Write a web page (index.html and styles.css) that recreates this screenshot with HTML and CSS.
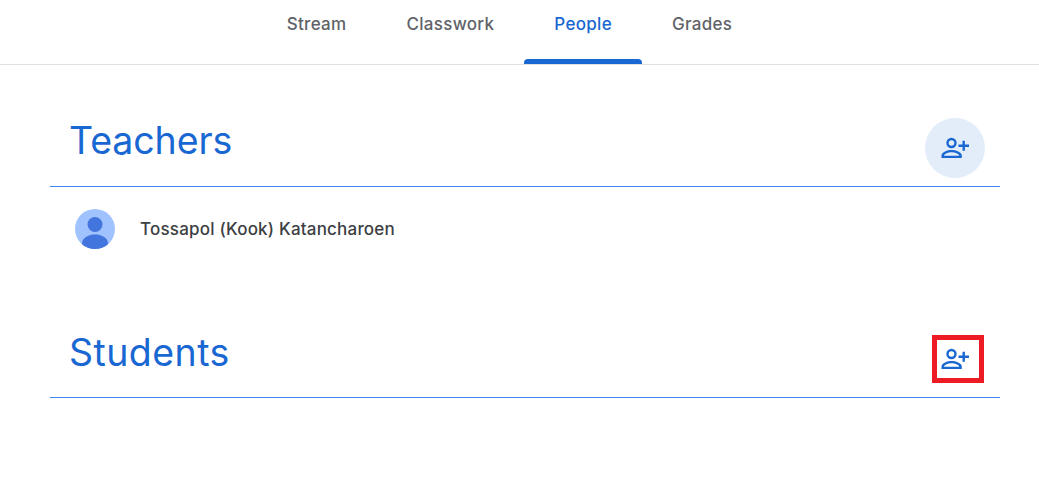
FILE: index.html
```html
<!doctype html>
<html lang="en">
<head>
<meta charset="utf-8" />
<title>People</title>
<link rel="stylesheet" href="styles.css">
</head>
<body>

<nav class="tabs">
	<a class="tab" href="#">Stream</a>
	<a class="tab" href="#">Classwork</a>
	<a class="tab active" href="#">People</a>
	<a class="tab" href="#">Grades</a>
</nav>

<main class="people">

	<section class="group teachers">
		<header class="group-head">
			<h2>Teachers</h2>
			<button class="invite filled" aria-label="Invite teachers">
				<svg viewBox="0 0 28 24" width="28" height="24"><use href="#add-person"/></svg>
			</button>
		</header>
		<div class="person">
			<svg class="avatar" viewBox="0 0 40 40" width="40" height="40">
				<clipPath id="avatar-clip"><circle cx="20" cy="20" r="20"/></clipPath>
				<circle cx="20" cy="20" r="20" fill="#a0c3ff"/>
				<circle cx="20" cy="15.5" r="7.5" fill="#4375de"/>
				<path d="M7 40 V35 C7 28 14 25.500 20 25.500 S33 28 33 35 V40 Z" fill="#4375de" clip-path="url(#avatar-clip)"/>
			</svg>
			<span class="name">Tossapol (Kook) Katancharoen</span>
		</div>
	</section>

	<section class="group students">
		<header class="group-head">
			<h2>Students</h2>
			<button class="invite marked" aria-label="Invite students">
				<svg viewBox="0 0 28 24" width="28" height="24"><use href="#add-person"/></svg>
			</button>
		</header>
	</section>

</main>

<svg class="defs" width="0" height="0">
	<symbol id="add-person" viewBox="0 0 28 24">
		<circle cx="10.500" cy="7" r="4" fill="none" stroke="#1967d2" stroke-width="2.400"/>
		<path d="M0.500 22 V19.500 C0.500 16 6.500 14 10.500 14 S20.800 16 20.800 19.500 V22 Z M3 19.800 H18.300 C18 17.500 13.500 16.200 10.500 16.200 S3.300 17.500 3 19.800 Z" fill="#1967d2" fill-rule="evenodd"/>
		<path d="M17.500 9.700 H28 M22.700 4.700 V14.700" fill="none" stroke="#1967d2" stroke-width="2.400"/>
	</symbol>
</svg>

</body>
</html>
```

FILE: styles.css
```css
:root {
	--blue: #1967d2;
	--grey: #5f6368;
	font-family: "Inter", "Roboto", sans-serif;
}

body, html {
	margin: 0;
	padding: 0;
	background: #fff;
}

.defs {
	display: block;
	height: 0;
}


/* Tabs */

.tabs {
	display: flex;
	justify-content: center;
	height: 64px;
	padding-right: 20px;
	border-bottom: 1px solid #e0e0e0;
}

.tab {
	position: relative;
	display: flex;
	align-items: center;
	justify-content: center;
	box-sizing: border-box;
	height: 64px;
	padding: 0 30px 16px;
	font-size: 17px;
	font-weight: 500;
	letter-spacing: 0.3px;
	color: var(--grey);
	text-decoration: none;
}

.tab.active {
	color: var(--blue);
}

.tab.active::after {
	content: "";
	position: absolute;
	left: 0;
	right: 0;
	bottom: 0;
	height: 5px;
	background: var(--blue);
	border-radius: 4px 4px 0 0;
}


/* Groups */

.people {
	margin: 0 39px 0 50px;
}

.group-head {
	display: flex;
	justify-content: space-between;
	box-sizing: border-box;
	border-bottom: 1px solid #4285f4;
}

.group-head h2 {
	margin: 1px 0 0 19px;
	font-size: 37.500px;
	font-weight: 400;
	line-height: 44px;
	letter-spacing: -0.1px;
	color: var(--blue);
}

.teachers .group-head {
	height: 122px;
	padding: 53px 15px 0 0;
}

.students .group-head {
	height: 99px;
	padding: 31px 16px 0 0;
}

.students h2 {
	letter-spacing: 0.450px;
}

.invite {
	display: flex;
	align-items: center;
	justify-content: center;
	padding: 0;
	border: 0;
	background: none;
}

.invite.filled {
	width: 60px;
	height: 60px;
	border-radius: 50%;
	background: #e3edfa;
}

.invite.marked {
	box-sizing: border-box;
	width: 52px;
	height: 48px;
	margin-top: 5px;
	padding-right: 6px;
	border: 5px solid #ed1c24;
}


/* People rows */

.person {
	display: flex;
	align-items: center;
	gap: 25px;
	height: 84px;
	padding: 0 0 0 25px;
}

.teachers {
	padding-bottom: 28px;
}

.name {
	font-size: 17px;
	font-weight: 500;
	letter-spacing: 0.2px;
	color: #3c4043;
}
```
